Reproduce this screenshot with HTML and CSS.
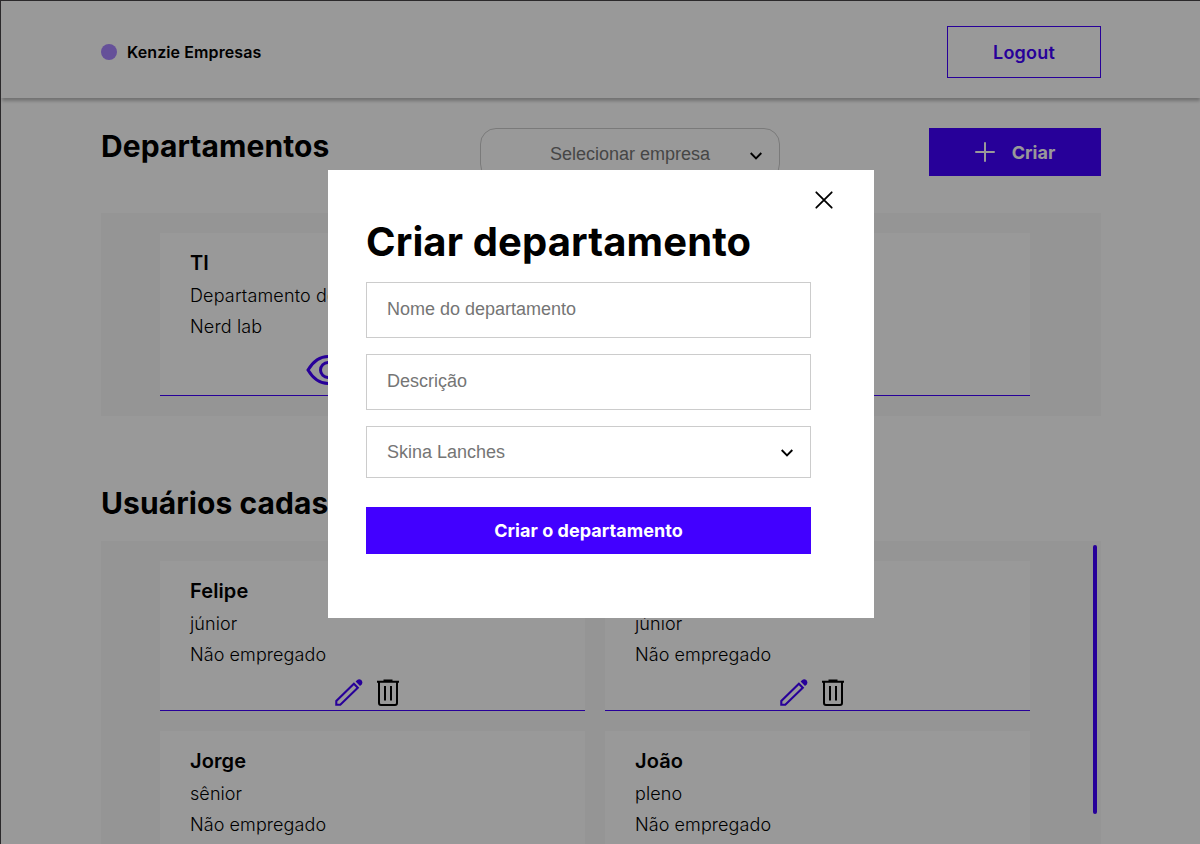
FILE: index.html
```html
<!DOCTYPE html>
<html lang="pt-br">
<head>
<meta charset="utf-8">
<title>Kenzie Empresas</title>
<link rel="stylesheet" href="styles.css">
</head>
<body>
<svg class="sprite" aria-hidden="true">
  <symbol id="pencil" viewBox="0 0 28 28"><path d="M1.300 25.700V21.900L18.900 4.800L22.800 8.700L5.300 25.700Z" fill="none" stroke="currentColor" stroke-width="2.100"/><path d="M20.600 2.600L22.200 1Q24.200 -.6 26.300 1.100Q28.200 3.200 26.700 5.400L25 7Z" fill="currentColor"/></symbol>
  <symbol id="trash" viewBox="0 0 24 28"><path d="M3 3V24Q3 26 5 26H19Q21 26 21 24V3M1 2.700H23M7.500 1.600H16.500M9 7V21.500M15 7V21.500" fill="none" stroke="currentColor" stroke-width="2"/></symbol>
  <symbol id="eye" viewBox="0 0 44 32"><path d="M2 16C8 6 14 2.500 22 2.500S36 6 42 16C36 26 30 29.500 22 29.500S8 26 2 16Z" fill="none" stroke="currentColor" stroke-width="3"/><circle cx="22" cy="16" r="7.500" fill="none" stroke="currentColor" stroke-width="3"/></symbol>
  <symbol id="chevron" viewBox="0 0 12 8"><path d="M.7 1L6 6.300L11.300 1" fill="none" stroke="currentColor" stroke-width="1.900"/></symbol>
</svg>
<div class="app">
  <header class="header">
    <div class="brand"><span class="dot"></span>Kenzie Empresas</div>
    <button class="logout">Logout</button>
  </header>
  <main class="main">
    <section class="toolbar">
      <h2 class="title">Departamentos</h2>
      <div class="company"><span>Selecionar empresa</span><svg class="chevron"><use href="#chevron"/></svg></div>
      <button class="create"><svg class="plus" viewBox="0 0 20 20"><path d="M10 1V19M1 10H19" stroke="currentColor" stroke-width="2" stroke-linecap="round"/></svg>Criar</button>
    </section>
    <section class="panel departments">
      <article class="card wide"><h3>TI</h3><p>Departamento de TI</p><p>Nerd lab</p><div class="actions"><svg class="eye"><use href="#eye"/></svg></div></article>
    </section>
    <h2 class="title users-title">Usuários cadastrados</h2>
    <section class="panel users">
      <article class="card"><h3>Felipe</h3><p>júnior</p><p>Não empregado</p><div class="actions"><svg class="pencil"><use href="#pencil"/></svg><svg class="trash"><use href="#trash"/></svg></div></article>
      <article class="card"><h3>Lucas</h3><p>júnior</p><p>Não empregado</p><div class="actions"><svg class="pencil"><use href="#pencil"/></svg><svg class="trash"><use href="#trash"/></svg></div></article>
      <article class="card"><h3>Jorge</h3><p>sênior</p><p>Não empregado</p></article>
      <article class="card"><h3>João</h3><p>pleno</p><p>Não empregado</p></article>
      <span class="thumb"></span>
    </section>
  </main>
</div>
<div class="overlay">
  <div class="modal">
    <svg class="close" viewBox="0 0 18 18"><path d="M1.300 1.300L16.700 16.700M16.700 1.300L1.300 16.700" stroke="#000" stroke-width="1.800" stroke-linecap="round"/></svg>
    <h1>Criar departamento</h1>
    <form class="form">
      <input class="field" placeholder="Nome do departamento">
      <input class="field" placeholder="Descrição">
      <div class="select"><span>Skina Lanches</span><svg class="chevron"><use href="#chevron"/></svg></div>
      <button class="submit" type="button">Criar o departamento</button>
    </form>
  </div>
</div>
</body>
</html>
```
FILE: styles.css
```css
* { box-sizing: border-box; margin: 0; padding: 0; }
body { height: 844px; overflow: hidden; font-family: Inter, sans-serif; color: #000; background: #fff; }
button { font-family: inherit; }
svg { display: block; flex: none; }
.sprite { position: absolute; width: 0; height: 0; }
.app { width: 1201px; height: 844px; overflow: hidden; border: solid #2b292b; border-width: 1px 0 0 1px; }
.header { display: flex; justify-content: space-between; align-items: flex-start; height: 97px; padding: 25px 100px 0; box-shadow: 0 4px 3px -1px rgba(0,0,0,.25); }
.brand { display: flex; align-items: center; gap: 10px; height: 52px; font-size: 16px; font-weight: 600; letter-spacing: .1px; }
.dot { width: 16px; height: 16px; border-radius: 50%; background: #a885ff; }
.logout { width: 154px; height: 52px; border: 1px solid #4200ff; background: none; color: #4200ff; font-size: 18px; font-weight: 600; letter-spacing: .2px; }
.main { width: 1000px; margin: 30px 0 0 100px; }
.toolbar { display: flex; justify-content: space-between; height: 85px; }
.title { font-size: 30px; line-height: 36px; font-weight: 700; letter-spacing: .08px; }
.toolbar .title { width: 230px; }
.company { display: flex; align-items: flex-start; justify-content: center; position: relative; width: 300px; height: 52px; padding-top: 15px; border: 1px solid #ccc; border-radius: 16px; color: #757575; font: 18px/21px "Liberation Sans", sans-serif; }
.chevron { width: 12px; height: 8px; color: #000; }
.company .chevron { position: absolute; right: 17px; top: 23px; }
.create { display: flex; align-items: center; justify-content: center; gap: 17px; width: 172px; height: 48px; border: 0; background: #4200ff; color: #fff; font-size: 18px; font-weight: 700; }
.plus { width: 20px; height: 20px; }
.panel { position: relative; background: #f8f8f8; }
.departments { height: 203px; padding: 20px 71px 20px 59px; }
.card { height: 150px; padding: 18px 30px 0; background: #fff; border-bottom: 1px solid #4200ff; }
.card.wide { height: 163px; }
.card h3 { font-size: 20px; line-height: 24px; font-weight: 600; letter-spacing: .1px; margin-bottom: 5px; }
.card p { font-size: 18px; line-height: 31px; font-weight: 300; letter-spacing: .08px; }
.card.wide p { letter-spacing: .15px; }
.actions { display: flex; justify-content: center; gap: 13px; margin: 9px 10px 0 0; }
.wide .actions { justify-content: flex-start; margin: 12px 0 0 115.5px; }
.pencil { width: 28px; height: 28px; color: #4200ff; }
.trash { width: 24px; height: 28px; }
.eye { width: 44px; height: 32px; color: #4200ff; }
.users-title { margin-top: 69px; }
.users { display: grid; grid-template-columns: 425px 425px; gap: 20px; height: 340px; margin-top: 20px; padding: 20px 59px; align-content: start; }
.thumb { position: absolute; top: 4px; right: 4px; width: 4px; height: 269px; border-radius: 2px; background: #4200ff; }
.overlay { position: fixed; inset: 1px -1px 0 1px; display: flex; justify-content: center; align-items: flex-start; padding-top: 169px; background: rgba(0,0,0,.4); }
.modal { width: 546px; height: 448px; padding: 21px 63px 0 38px; background: #fff; }
.close { width: 18px; height: 18px; margin: 0 -22px 0 auto; }
.modal h1 { margin-top: 9px; font-size: 40px; line-height: 48px; font-weight: 700; letter-spacing: .12px; white-space: nowrap; }
.form { display: flex; flex-direction: column; gap: 16px; margin-top: 16px; }
.field { height: 56px; padding: 0 20px 1px; border: 1px solid #ccc; font: 18px "Liberation Sans", sans-serif; }
.field::placeholder { color: #757575; }
.select { display: flex; justify-content: space-between; align-items: flex-start; height: 52px; padding: 15px 17px 0 20px; border: 1px solid #ccc; color: #757575; font: 18px/21px "Liberation Sans", sans-serif; }
.select .chevron { margin-top: 7px; }
.submit { height: 47px; margin-top: 13px; border: 0; background: #4200ff; color: #fff; font-size: 18px; font-weight: 700; letter-spacing: .05px; }
```
